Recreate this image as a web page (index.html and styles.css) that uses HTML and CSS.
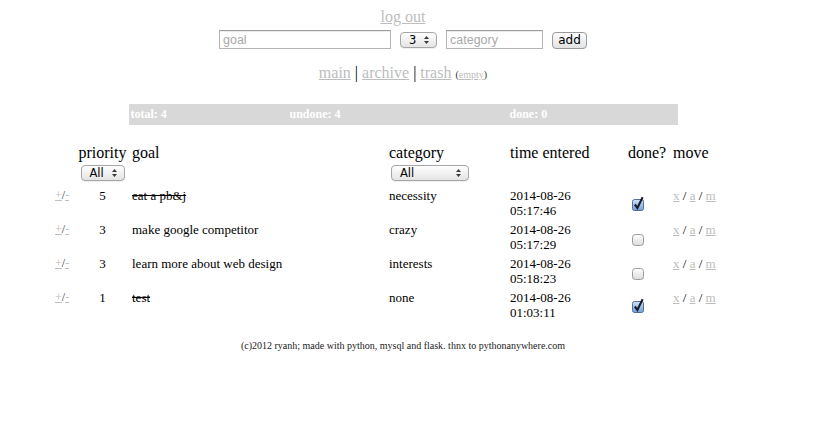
FILE: index.html
```html
<!DOCTYPE html>
<html>
<head>
<meta charset="utf-8">
<title>goals</title>
<link rel="stylesheet" href="styles.css">
</head>
<body>
<div class="page">
  <div class="logout"><a href="#">log out</a></div>
  <form class="addform">
    <input class="txt goal" type="text" placeholder="goal">
    <span class="sel sel-pri"><span class="sel-val">3</span><svg class="arrows" width="5" height="8" viewBox="0 0 5 8"><polygon points="0,3 2.5,0 5,3" /><polygon points="0,5 2.5,8 5,5" /></svg></span>
    <input class="txt cat" type="text" placeholder="category">
    <button class="btn" type="button">add</button>
  </form>
  <div class="nav"><a href="#">main</a> | <a href="#">archive</a> | <a href="#">trash</a> <span class="empty">(<a href="#">empty</a>)</span></div>
  <div class="stats"><span class="st st1">total: 4</span><span class="st st2">undone: 4</span><span class="st st3">done: 0</span></div>
  <table class="goals">
    <colgroup>
      <col class="c1"><col class="c2"><col class="c3"><col class="c4"><col class="c5"><col class="c6"><col class="c7">
    </colgroup>
    <thead>
      <tr>
        <th></th>
        <th class="pri">priority<span class="sel sel-all"><span class="sel-val">All</span><svg class="arrows" width="5" height="8" viewBox="0 0 5 8"><polygon points="0,3 2.5,0 5,3" /><polygon points="0,5 2.5,8 5,5" /></svg></span></th>
        <th>goal</th>
        <th>category<span class="sel sel-cat"><span class="sel-val">All</span><svg class="arrows" width="5" height="8" viewBox="0 0 5 8"><polygon points="0,3 2.5,0 5,3" /><polygon points="0,5 2.5,8 5,5" /></svg></span></th>
        <th>time entered</th>
        <th>done?</th>
        <th>move</th>
      </tr>
    </thead>
    <tbody>
      <tr>
        <td class="pm"><a href="#">+</a>/<a href="#">-</a></td>
        <td class="num">5</td>
        <td class="done">eat a pb&amp;j</td>
        <td>necessity</td>
        <td>2014-08-26<br>05:17:46</td>
        <td class="chk"><svg class="cb" width="14" height="17" viewBox="0 0 14 17"><defs><linearGradient id="gb" x1="0" y1="0" x2="0" y2="1"><stop offset="0" stop-color="#d2e4f8"/><stop offset="1" stop-color="#6f9fd9"/></linearGradient></defs><rect x="1.5" y="4.5" width="11" height="11" rx="2" fill="url(#gb)" stroke="#4f6f98"/><path d="M3.8 9.5 L6.4 13 L11.6 2.2" fill="none" stroke="#1b1d2a" stroke-width="2.1"/></svg></td>
        <td class="mv"><a href="#">x</a> / <a href="#">a</a> / <a href="#">m</a></td>
      </tr>
      <tr>
        <td class="pm"><a href="#">+</a>/<a href="#">-</a></td>
        <td class="num">3</td>
        <td>make google competitor</td>
        <td>crazy</td>
        <td>2014-08-26<br>05:17:29</td>
        <td class="chk"><svg class="cb" width="14" height="17" viewBox="0 0 14 17"><defs><linearGradient id="gw1" x1="0" y1="0" x2="0" y2="1"><stop offset="0" stop-color="#ffffff"/><stop offset="1" stop-color="#dcdcdc"/></linearGradient></defs><rect x="1.5" y="5.5" width="11" height="11" rx="3" fill="url(#gw1)" stroke="#9a9a9a"/></svg></td>
        <td class="mv"><a href="#">x</a> / <a href="#">a</a> / <a href="#">m</a></td>
      </tr>
      <tr>
        <td class="pm"><a href="#">+</a>/<a href="#">-</a></td>
        <td class="num">3</td>
        <td>learn more about web design</td>
        <td>interests</td>
        <td>2014-08-26<br>05:18:23</td>
        <td class="chk"><svg class="cb" width="14" height="17" viewBox="0 0 14 17"><defs><linearGradient id="gw2" x1="0" y1="0" x2="0" y2="1"><stop offset="0" stop-color="#ffffff"/><stop offset="1" stop-color="#dcdcdc"/></linearGradient></defs><rect x="1.5" y="5.5" width="11" height="11" rx="3" fill="url(#gw2)" stroke="#9a9a9a"/></svg></td>
        <td class="mv"><a href="#">x</a> / <a href="#">a</a> / <a href="#">m</a></td>
      </tr>
      <tr>
        <td class="pm"><a href="#">+</a>/<a href="#">-</a></td>
        <td class="num">1</td>
        <td class="done">test</td>
        <td>none</td>
        <td>2014-08-26<br>01:03:11</td>
        <td class="chk"><svg class="cb" width="14" height="17" viewBox="0 0 14 17"><defs><linearGradient id="gb2" x1="0" y1="0" x2="0" y2="1"><stop offset="0" stop-color="#d2e4f8"/><stop offset="1" stop-color="#6f9fd9"/></linearGradient></defs><rect x="1.5" y="4.5" width="11" height="11" rx="2" fill="url(#gb2)" stroke="#4f6f98"/><path d="M3.8 9.5 L6.4 13 L11.6 2.2" fill="none" stroke="#1b1d2a" stroke-width="2.1"/></svg></td>
        <td class="mv"><a href="#">x</a> / <a href="#">a</a> / <a href="#">m</a></td>
      </tr>
    </tbody>
  </table>
  <div class="footer">(c)2012 ryanh; made with python, mysql and flask. thnx to pythonanywhere.com</div>
</div>
</body>
</html>
```

FILE: styles.css
```css
html, body {
  background: #ffffff;
}
body {
  margin: 8px;
  font-family: "Liberation Serif", "Times New Roman", serif;
  color: #000;
}
.page {
  width: 790px;
}
a {
  color: #bdbdbd;
  text-decoration: underline;
}
.logout {
  text-align: center;
  font-size: 16px;
  line-height: 18px;
  height: 18px;
}
.addform {
  margin: 4px 0 0 0;
  height: 19px;
  display: flex;
  justify-content: center;
  align-items: center;
  gap: 9px;
}
.txt {
  box-sizing: border-box;
  height: 19px;
  margin: 0;
  padding: 0 3px;
  border: 1px solid #b4b4b4;
  border-top-color: #9c9c9c;
  box-shadow: inset 0 1px 1px rgba(0,0,0,0.08);
  font-family: "Liberation Sans", Arial, sans-serif;
  font-size: 12.5px;
  color: #333;
  outline: none;
  background: #fff;
}
.txt::placeholder {
  color: #a9a9a9;
}
.goal { width: 172px; }
.cat { width: 97px; }
.sel {
  box-sizing: border-box;
  display: flex;
  align-items: center;
  justify-content: space-between;
  height: 16px;
  border: 1px solid #a6a6a6;
  border-radius: 4px;
  background: linear-gradient(#ffffff, #f1f1f1 50%, #e4e4e4);
  box-shadow: 0 1px 0 rgba(0,0,0,0.06);
  font-family: "DejaVu Sans", "Liberation Sans", sans-serif;
  font-size: 11.5px;
  line-height: 14px;
  color: #000;
  padding: 0 7px 0 8px;
}
.sel .arrows {
  display: block;
  fill: #3a3a3a;
}
.sel-pri {
  width: 37px;
}
.btn {
  box-sizing: border-box;
  width: 35px;
  height: 17px;
  margin: 1px 0 0 0;
  padding: 0;
  border: 1px solid #9a9a9a;
  border-radius: 4px;
  background: linear-gradient(#ffffff, #f0f0f0 50%, #e2e2e2);
  font-family: "DejaVu Sans", "Liberation Sans", sans-serif;
  font-size: 12px;
  line-height: 15px;
  color: #000;
}
.nav {
  margin-top: 15px;
  text-align: center;
  font-size: 16px;
  line-height: 18px;
}
.nav .empty {
  font-size: 10px;
  color: #333;
}
.stats {
  width: 549px;
  margin: 20px auto 0 auto;
  height: 21px;
  background: #d8d8d8;
  display: flex;
  font-weight: bold;
  font-size: 12px;
  line-height: 21px;
  color: #ffffff;
}
.st {
  box-sizing: border-box;
  padding-left: 2px;
}
.st1 { width: 159px; }
.st2 { width: 220px; }
.st3 { flex: 1; }
.goals {
  margin: 17px 0 0 44px;
  border-collapse: collapse;
  table-layout: fixed;
  width: 678px;
}
.c1 { width: 24px; }
.c2 { width: 53px; }
.c3 { width: 257px; }
.c4 { width: 121px; }
.c5 { width: 118px; }
.c6 { width: 45px; }
.c7 { width: 60px; }
.goals th {
  font-weight: normal;
  font-size: 16px;
  line-height: 18px;
  text-align: left;
  vertical-align: top;
  padding: 2px 3px 3px 3px;
  white-space: nowrap;
}
.goals th.pri {
  text-align: center;
  padding: 2px 0 3px 0;
}
.sel-all {
  width: 44px;
  margin: 3px auto 2px auto;
  text-align: left;
}
.sel-cat {
  width: 78px;
  margin: 3px 0 2px 2px;
}
.goals td {
  font-size: 13px;
  line-height: 15px;
  vertical-align: top;
  padding: 2px 3px;
  white-space: nowrap;
}
.goals td.num {
  text-align: center;
  padding: 2px 0;
}
.goals td.pm {
  font-size: 12px;
  color: #333;
}
.goals td.done {
  text-decoration: line-through;
}
.cb {
  display: block;
  margin: 7px 0 0 3px;
}
.footer {
  margin-top: 18px;
  text-align: center;
  font-size: 10px;
  line-height: 12px;
  color: #222;
}
```
